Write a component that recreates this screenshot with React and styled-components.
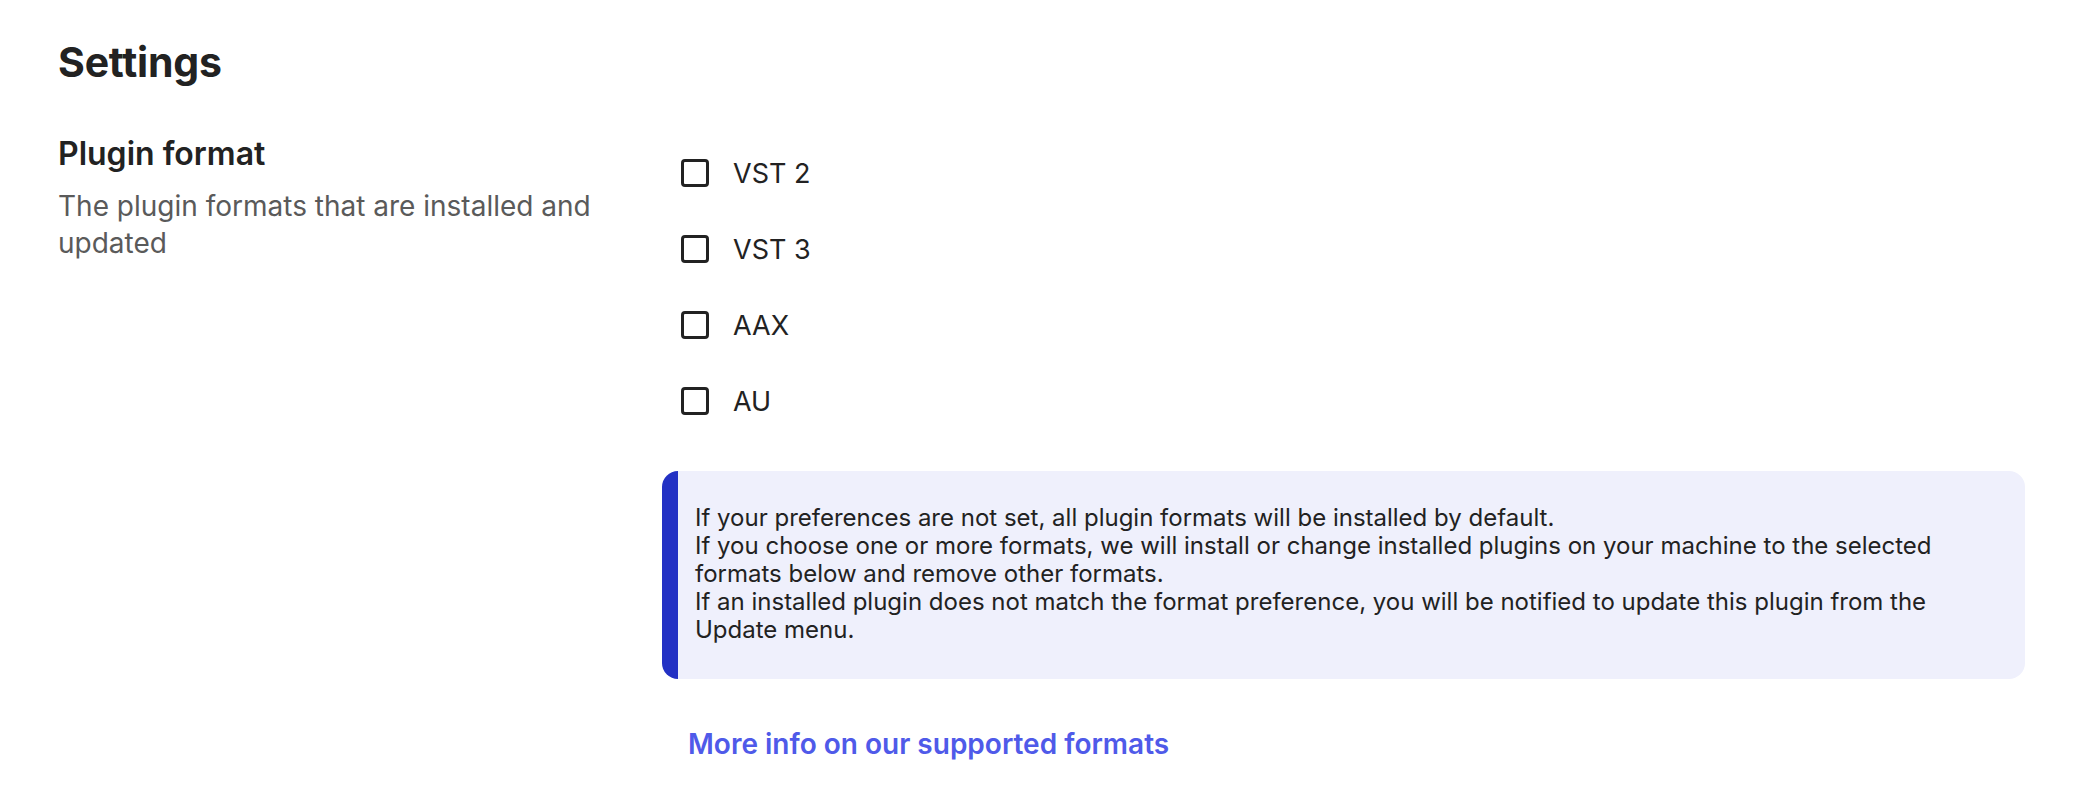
import styled, { createGlobalStyle } from 'styled-components';

const formats = ['VST 2', 'VST 3', 'AAX', 'AU'];

const GlobalStyle = createGlobalStyle`
  body {
    margin: 0;
    background: #ffffff;
    font-family: Inter, 'Noto Sans', sans-serif;
    color: #222222;
  }
`;

const App = () => {
  return (
    <>
      <GlobalStyle />
      <Page>
        <Title>Settings</Title>
        <Section>
          <Intro>
            <SectionTitle>Plugin format</SectionTitle>
            <Description>
              The plugin formats that are installed and updated
            </Description>
          </Intro>
          <Options>
            <CheckList>
              {formats.map((name) => (
                <Option key={name}>
                  <Box type="checkbox" />
                  <span>{name}</span>
                </Option>
              ))}
            </CheckList>
            <Notice>
              If your preferences are not set, all plugin formats will be installed by default.
              <br />
              If you choose one or more formats, we will install or change installed plugins on your machine to the selected formats below and remove other formats.
              <br />
              If an installed plugin does not match the format preference, you will be notified to update this plugin from the Update menu.
            </Notice>
            <MoreLink href="#">More info on our supported formats</MoreLink>
          </Options>
        </Section>
      </Page>
    </>
  );
};

export default App;

const Page = styled.div`
  padding: 38px 57px 40px 58px;
`;

const Title = styled.h1`
  margin: 0;
  font-size: 41px;
  line-height: 48px;
  font-weight: 700;
  letter-spacing: -0.2px;
`;

const Section = styled.div`
  display: grid;
  grid-template-columns: 604px 1363px;
  margin-top: 50px;
`;

const Intro = styled.div`
  display: flex;
  flex-direction: column;
`;

const SectionTitle = styled.h2`
  margin: 0;
  font-size: 32px;
  line-height: 36px;
  font-weight: 600;
`;

const Description = styled.p`
  margin: 16px 0 0;
  width: 560px;
  font-size: 28px;
  line-height: 37px;
  color: #5a5a5a;
`;

const Options = styled.div`
  display: flex;
  flex-direction: column;
  padding-top: 23px;
`;

const CheckList = styled.div`
  display: flex;
  flex-direction: column;
  gap: 48px;
  padding-left: 19px;
`;

const Option = styled.label`
  display: flex;
  align-items: center;
  gap: 24px;
  height: 28px;
  font-size: 27px;
  color: #222222;
`;

const Box = styled.input`
  appearance: none;
  margin: 0;
  width: 28px;
  height: 28px;
  border: 3px solid #222222;
  border-radius: 4px;
  background: #ffffff;
`;

const Notice = styled.div`
  margin-top: 56px;
  padding: 33px 40px 35px 17px;
  border-left: 16px solid #2331c4;
  border-radius: 16px;
  background: #eff0fc;
  font-size: 24px;
  line-height: 28px;
  color: #222222;
`;

const MoreLink = styled.a`
  margin-top: 49px;
  padding-left: 26px;
  font-size: 28px;
  line-height: 32px;
  font-weight: 600;
  color: #4f5ae9;
  text-decoration: none;
`;
